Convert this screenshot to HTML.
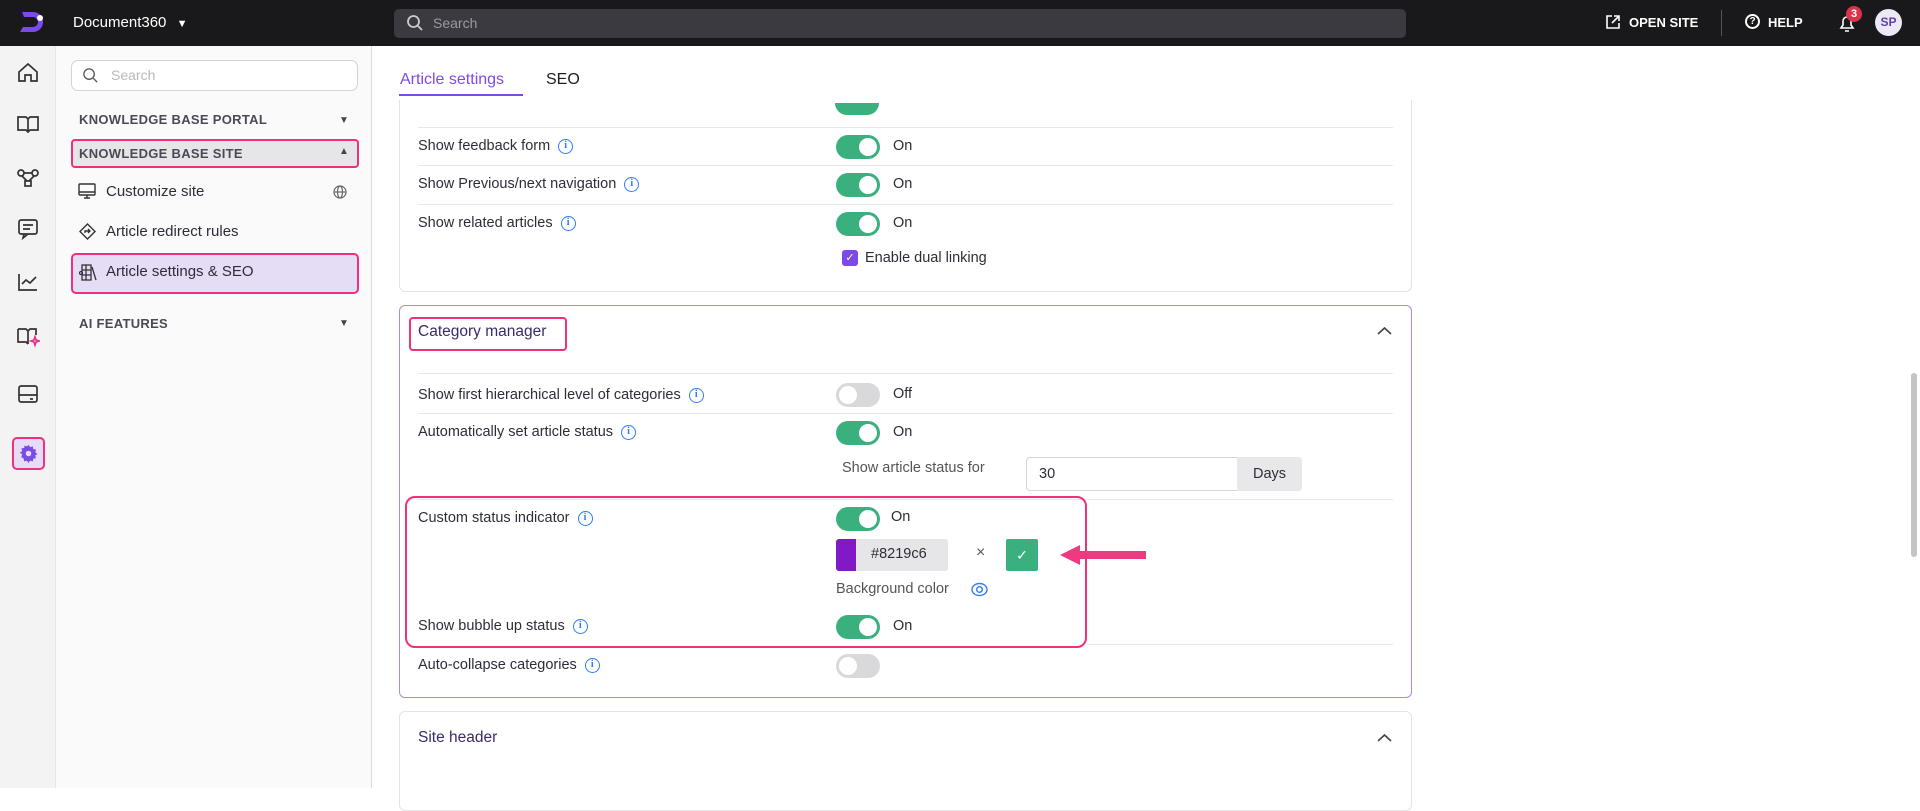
<!DOCTYPE html>
<html><head><meta charset="utf-8"><style>
*{box-sizing:border-box;margin:0;padding:0}
body{width:1920px;height:788px;overflow:hidden;background:#fff;font-family:"Liberation Sans",sans-serif;color:#2d2d3a;position:relative}
.a{position:absolute}
.top{left:0;top:0;width:1920px;height:46px;background:#19191b}
.rail{left:0;top:46px;width:56px;height:742px;background:#f3f3f4;border-right:1px solid #e6e6e6}
.side{left:56px;top:46px;width:316px;height:742px;background:#fafafa;border-right:1px solid #ddd}
.hdr{font-size:13px;font-weight:bold;color:#4a4a55;letter-spacing:.3px}
.item{font-size:15px;color:#2d2d3a}
.card{border:1px solid #e3e3e8;border-radius:6px;background:#fff}
.lbl{font-size:14.5px;color:#2d2d3a}
.info{display:inline-block;width:15px;height:15px;border:1.5px solid #2f7cf6;border-radius:50%;color:#2f7cf6;font-size:10px;text-align:center;line-height:12px;font-weight:bold;font-family:"Liberation Serif",serif;vertical-align:middle;margin-left:8px}
.tg{width:44px;height:24px;border-radius:12px;background:#3bb07f}
.tg::after{content:"";position:absolute;right:3px;top:3px;width:18px;height:18px;border-radius:50%;background:#fff}
.tg.off{background:#d9d9dc}
.tg.off::after{left:3px;right:auto}
.on{font-size:14.5px}
.div{height:1px;background:#e8e8ec}
</style></head><body>
<div class="a top"></div>
<svg class="a" style="left:18px;top:9px" width="28" height="28" viewBox="0 0 28 28"><path d="M4 3h11a10 10 0 0 1 0 20H2l3-5h10a5 5 0 0 0 0-10H6z" fill="#7a4af0"/><circle cx="22" cy="9" r="3" fill="#fff"/></svg>
<div class="a" style="left:73px;top:14px;color:#fff;font-size:15px">Document360 <span style="font-size:11px;margin-left:6px">▼</span></div>
<div class="a" style="left:394px;top:9px;width:1012px;height:29px;background:#3a3a40;border-radius:5px"></div>
<svg class="a" style="left:406px;top:14px" width="18" height="18" viewBox="0 0 18 18"><circle cx="7.5" cy="7.5" r="5.5" stroke="#ccc" stroke-width="1.8" fill="none"/><path d="M12 12l4 4" stroke="#ccc" stroke-width="1.8"/></svg>
<div class="a" style="left:433px;top:15px;color:#9a9aa0;font-size:14px">Search</div>
<svg class="a" style="left:1605px;top:14px" width="16" height="16" viewBox="0 0 16 16" fill="none" stroke="#fff" stroke-width="1.6"><path d="M7 2H2v12h12V9M9 2h5v5M14 2L7 9"/></svg>
<div class="a" style="left:1629px;top:15px;color:#fff;font-size:13px;font-weight:bold">OPEN SITE</div>
<div class="a" style="left:1721px;top:10px;width:1px;height:26px;background:#555"></div>
<div class="a" style="left:1745px;top:14px;width:15px;height:15px;border:2px solid #fff;border-radius:50%;color:#fff;font-size:10px;text-align:center;line-height:11px;font-weight:bold">?</div>
<div class="a" style="left:1768px;top:15px;color:#fff;font-size:13px;font-weight:bold">HELP</div>
<svg class="a" style="left:1838px;top:13px" width="18" height="20" viewBox="0 0 18 20" fill="none" stroke="#fff" stroke-width="1.6"><path d="M3 15h12l-2-3V8a4 4 0 0 0-8 0v4zM7 18h4"/></svg>
<div class="a" style="left:1846px;top:6px;width:16px;height:16px;border-radius:50%;background:#d9344a;color:#fff;font-size:11px;text-align:center;line-height:16px;font-weight:bold">3</div>
<div class="a" style="left:1875px;top:9px;width:27px;height:27px;border-radius:50%;background:#ece8f5;color:#5c3fb0;font-size:12px;font-weight:bold;text-align:center;line-height:27px">SP</div>

<div class="a rail"></div>
<svg class="a" style="left:16px;top:60px" width="24" height="380" viewBox="0 0 24 380" fill="none" stroke="#333" stroke-width="1.7">
<path d="M3 12l9-8 9 8v9h-6v-6H9v6H3z"/>
<path d="M2 57h8l2 2 2-2h8v13h-8l-2 2-2-2H2z M12 59v13"/>
<circle cx="5" cy="113" r="3"/><circle cx="19" cy="113" r="3"/><rect x="9" y="121" width="6" height="5"/><path d="M8 113h8M6 116l5 5M18 116l-5 5"/>
<rect x="3" y="160" width="18" height="14" rx="2"/><path d="M8 174l-1 4 5-4M7 165h10M7 169h7"/>
<path d="M3 214v16h18M6 224l4-4 4 3 6-6"/>
<path d="M2 269h8l2 2 2-2h6v6M12 271v13M2 269v13h8l2 2" /><path d="M19 277l1 3 3 1-3 1-1 3-1-3-3-1 3-1z" stroke="#e0308a"/>
<rect x="3" y="326" width="18" height="16" rx="2"/><path d="M3 335h18M14 339h3"/>
</svg>
<div class="a" style="left:12px;top:437px;width:33px;height:33px;border:2.5px solid #f0317a;border-radius:5px;background:#e6dcf8"></div>
<svg class="a" style="left:19px;top:444px" width="19" height="19" viewBox="0 0 24 24"><path fill="#7c4ae8" d="M12 1l2 3 3.5-1 .5 3.5 3.5.5-1 3.5 3 2-3 2 1 3.5-3.5.5-.5 3.5-3.5-1-2 3-2-3-3.5 1-.5-3.5L3 16.5l1-3.5-3-2 3-2-1-3.5 3.5-.5L7 2l3.5 1z"/><circle cx="12" cy="12" r="3.5" fill="#e6dcf8"/></svg>

<div class="a side"></div>
<div class="a" style="left:71px;top:60px;width:287px;height:31px;border:1px solid #d4d4d8;border-radius:7px;background:#fff"></div>
<svg class="a" style="left:82px;top:67px" width="17" height="17" viewBox="0 0 18 18"><circle cx="7.5" cy="7.5" r="5.5" stroke="#555" stroke-width="1.4" fill="none"/><path d="M12 12l4 4" stroke="#555" stroke-width="1.4"/></svg>
<div class="a" style="left:111px;top:67px;color:#b8b8be;font-size:14px">Search</div>
<div class="a hdr" style="left:79px;top:112px">KNOWLEDGE BASE PORTAL</div>
<div class="a" style="left:339px;top:115px;font-size:10px;color:#444">▼</div>
<div class="a" style="left:71px;top:139px;width:288px;height:29px;border:2.5px solid #f0317a;border-radius:4px;background:#e6e6e9"></div>
<div class="a hdr" style="left:79px;top:146px">KNOWLEDGE BASE SITE</div>
<div class="a" style="left:339px;top:146px;font-size:10px;color:#444">▲</div>
<svg class="a" style="left:78px;top:183px" width="18" height="17" viewBox="0 0 18 17" fill="none" stroke="#333" stroke-width="1.4"><rect x="1" y="1" width="16" height="11" rx="1"/><path d="M1 9h16M6 15h6M9 12v3"/></svg>
<div class="a item" style="left:106px;top:183px">Customize site</div>
<svg class="a" style="left:333px;top:185px" width="14" height="14" viewBox="0 0 14 14" fill="none" stroke="#666" stroke-width="1.2"><circle cx="7" cy="7" r="6"/><ellipse cx="7" cy="7" rx="2.5" ry="6"/><path d="M1 7h12"/></svg>
<svg class="a" style="left:79px;top:223px" width="17" height="17" viewBox="0 0 17 17" fill="none" stroke="#333" stroke-width="1.4"><path d="M8.5 1l7.5 7.5-7.5 7.5L1 8.5z"/><path d="M6 10V8h4M9 6l2 2-2 2"/></svg>
<div class="a item" style="left:106px;top:223px">Article redirect rules</div>
<div class="a" style="left:71px;top:253px;width:288px;height:41px;border:2.5px solid #f0317a;border-radius:5px;background:#e5dcf6"></div>
<svg class="a" style="left:79px;top:264px" width="18" height="17" viewBox="0 0 18 17" fill="none" stroke="#333" stroke-width="1.3"><rect x="3" y="1" width="9" height="15"/><path d="M3 6h9M3 11h9M7 1v15M13 3l4 13"/><circle cx="2" cy="9" r="1.5"/></svg>
<div class="a item" style="left:106px;top:263px">Article settings &amp; SEO</div>
<div class="a hdr" style="left:79px;top:316px">AI FEATURES</div>
<div class="a" style="left:339px;top:318px;font-size:10px;color:#444">▼</div>

<div class="a" style="left:400px;top:71px;font-size:16px;color:#7c4ae8">Article settings</div>
<div class="a" style="left:399px;top:94px;width:124px;height:2px;background:#7c4ae8"></div>
<div class="a" style="left:546px;top:71px;font-size:16px;color:#1d1d26">SEO</div>

<div class="a card" style="left:399px;top:100px;width:1013px;height:192px;border-top:none;border-radius:0 0 6px 6px"></div>
<div class="a" style="left:835px;top:103px;width:44px;height:12px;background:#3bb07f;border-radius:0 0 12px 12px"></div>
<div class="a div" style="left:418px;top:127px;width:975px"></div>
<div class="a lbl" style="left:418px;top:138px">Show feedback form<span class="info">i</span></div>
<div class="a tg" style="left:836px;top:135px"></div><div class="a on" style="left:893px;top:138px">On</div>
<div class="a div" style="left:418px;top:165px;width:975px"></div>
<div class="a lbl" style="left:418px;top:176px">Show Previous/next navigation<span class="info">i</span></div>
<div class="a tg" style="left:836px;top:173px"></div><div class="a on" style="left:893px;top:176px">On</div>
<div class="a div" style="left:418px;top:204px;width:975px"></div>
<div class="a lbl" style="left:418px;top:215px">Show related articles<span class="info">i</span></div>
<div class="a tg" style="left:836px;top:212px"></div><div class="a on" style="left:893px;top:215px">On</div>
<div class="a" style="left:842px;top:250px;width:16px;height:16px;background:#7c4ae8;border-radius:3px;color:#fff;font-size:11px;text-align:center;line-height:16px">✓</div>
<div class="a on" style="left:865px;top:250px">Enable dual linking</div>

<div class="a card" style="left:399px;top:305px;width:1013px;height:393px;border-color:#a889f2"></div>
<div class="a" style="left:409px;top:317px;width:158px;height:34px;border:2.5px solid #f0317a;border-radius:4px"></div>
<div class="a" style="left:418px;top:323px;font-size:15.5px;color:#3a2a6a">Category manager</div>
<svg class="a" style="left:1377px;top:326px" width="15" height="10" viewBox="0 0 15 10" fill="none" stroke="#444" stroke-width="1.6"><path d="M1 8l6.5-6 6.5 6"/></svg>
<div class="a div" style="left:418px;top:373px;width:975px"></div>
<div class="a lbl" style="left:418px;top:387px">Show first hierarchical level of categories<span class="info">i</span></div>
<div class="a tg off" style="left:836px;top:383px"></div><div class="a on" style="left:893px;top:386px">Off</div>
<div class="a div" style="left:418px;top:413px;width:975px"></div>
<div class="a lbl" style="left:418px;top:424px">Automatically set article status<span class="info">i</span></div>
<div class="a tg" style="left:836px;top:421px"></div><div class="a on" style="left:893px;top:424px">On</div>
<div class="a on" style="left:842px;top:460px;color:#555">Show article status for</div>
<div class="a" style="left:1026px;top:457px;width:276px;height:34px;border:1px solid #d6d6da;border-radius:4px"></div>
<div class="a" style="left:1237px;top:457px;width:65px;height:34px;background:#e8e8ea;border-radius:0 4px 4px 0;font-size:14.5px;text-align:center;line-height:34px">Days</div>
<div class="a on" style="left:1039px;top:466px">30</div>
<div class="a div" style="left:418px;top:499px;width:975px"></div>
<div class="a" style="left:405px;top:496px;width:682px;height:152px;border:2.5px solid #f0317a;border-radius:10px"></div>
<div class="a lbl" style="left:418px;top:510px">Custom status indicator<span class="info">i</span></div>
<div class="a tg" style="left:836px;top:507px"></div><div class="a on" style="left:891px;top:509px">On</div>
<div class="a" style="left:836px;top:539px;width:112px;height:32px;background:#e6e6e8;border-radius:3px"></div>
<div class="a" style="left:836px;top:539px;width:20px;height:32px;background:#8219c6;border-radius:3px 0 0 3px"></div>
<div class="a on" style="left:871px;top:546px">#8219c6</div>
<div class="a" style="left:976px;top:544px;font-size:16px;color:#555">×</div>
<div class="a" style="left:1006px;top:539px;width:32px;height:32px;background:#3bb07f;border-radius:2px;color:#fff;text-align:center;line-height:32px;font-size:14px">✓</div>
<svg class="a" style="left:1056px;top:542px" width="94" height="26" viewBox="0 0 94 26"><path d="M4 13l20-10v6h66v8H24v6z" fill="#ef3a82"/></svg>
<div class="a on" style="left:836px;top:581px;color:#555">Background color</div>
<svg class="a" style="left:971px;top:581px" width="17" height="17" viewBox="0 0 17 17" fill="none" stroke="#2f7cf6" stroke-width="1.4"><ellipse cx="8.5" cy="8.5" rx="7.5" ry="6"/><circle cx="8.5" cy="8.5" r="2.8"/></svg>
<div class="a lbl" style="left:418px;top:618px">Show bubble up status<span class="info">i</span></div>
<div class="a tg" style="left:836px;top:615px"></div><div class="a on" style="left:893px;top:618px">On</div>
<div class="a div" style="left:1087px;top:644px;width:306px"></div>
<div class="a lbl" style="left:418px;top:657px">Auto-collapse categories<span class="info">i</span></div>
<div class="a tg off" style="left:836px;top:654px"></div>

<div class="a card" style="left:399px;top:711px;width:1013px;height:100px"></div>
<div class="a" style="left:418px;top:729px;font-size:15.5px;color:#3a2a6a">Site header</div>
<svg class="a" style="left:1377px;top:733px" width="15" height="10" viewBox="0 0 15 10" fill="none" stroke="#444" stroke-width="1.6"><path d="M1 8l6.5-6 6.5 6"/></svg>

<div class="a" style="left:1911px;top:373px;width:6px;height:184px;background:#c4c4c4;border-radius:3px"></div>
</body></html>
